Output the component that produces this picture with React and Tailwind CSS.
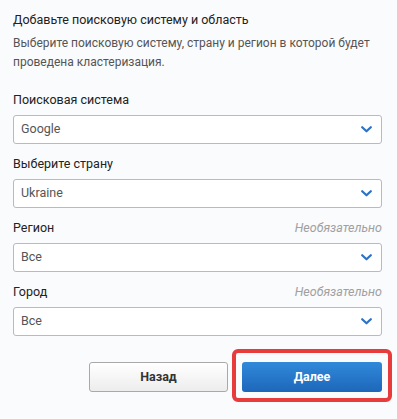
import React from "react";

function Chevron() {
  return (
    <svg width="11" height="7" viewBox="0 0 11 7" className="shrink-0">
      <path d="M1.2 1.2 L5.5 5.3 L9.8 1.2" fill="none" stroke="#2a73c6" strokeWidth="2.2" strokeLinecap="round" strokeLinejoin="round" />
    </svg>
  );
}

function Field({ label, value, optional }) {
  return (
    <div className="flex flex-col">
      <div className="flex h-[20px] items-center justify-between leading-[20px]">
        <span className="text-[12.5px] text-[#222]">{label}</span>
        {optional && <span className="text-[12.5px] italic text-[#a0a0a0]">Необязательно</span>}
      </div>
      <div className="mt-[5px] flex h-[29px] items-center justify-between rounded-[3px] border border-[#b4bbc8] bg-white pl-[7px] pr-[9px]">
        <span className="text-[12.5px] text-[#555]">{value}</span>
        <Chevron />
      </div>
    </div>
  );
}

export default function App() {
  return (
    <div
      className="h-[419px] w-[397px] bg-[#fafbfd] pl-[13px] pr-[15px] pt-[10px]"
      style={{ fontFamily: "Roboto, 'Noto Sans', sans-serif" }}
    >
      <div className="h-[20px] text-[12.5px] leading-[20px] text-[#222]">Добавьте поисковую систему и область</div>
      <div className="mt-[4px] text-[12px] leading-[19px] text-[#555]">
        Выберите поисковую систему, страну и регион в которой будет проведена кластеризация.
      </div>
      <div className="mt-[18px] flex flex-col gap-[10px]">
        <Field label="Поисковая система" value="Google" />
        <Field label="Выберите страну" value="Ukraine" />
        <Field label="Регион" value="Все" optional />
        <Field label="Город" value="Все" optional />
      </div>
      <div className="mt-[26px] flex justify-end gap-[14px] pr-0">
        <button className="h-[30px] w-[139px] rounded-[3px] border border-[#a9a9a9] bg-gradient-to-b from-white to-[#ededed] text-[12.5px] font-bold text-[#333]">
          Назад
        </button>
        <div className="relative">
          <button className="h-[30px] w-[140px] rounded-[3px] bg-gradient-to-b from-[#3189da] to-[#1d67ba] text-[12.5px] font-bold text-white">
            Далее
          </button>
          <div className="pointer-events-none absolute -bottom-[10px] -left-[10px] -right-[10px] -top-[13px] rounded-[6px] border-[4.5px] border-[#e83b3c]" />
        </div>
      </div>
    </div>
  );
}
